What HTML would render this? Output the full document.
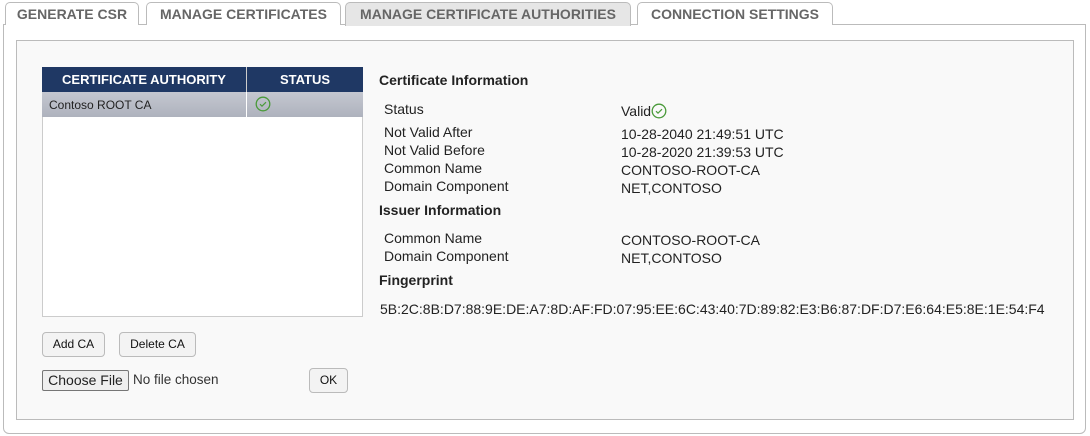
<!DOCTYPE html>
<html><head><style>
*{box-sizing:border-box;margin:0;padding:0}
body{width:1090px;height:436px;background:#fff;font-family:"Liberation Sans",sans-serif;position:relative;overflow:hidden;color:#222}
.tab{position:absolute;top:2px;height:23px;border:1px solid #bbb;border-bottom:none;border-radius:5px 5px 0 0;background:#fff;font-weight:bold;font-size:14px;color:#666;text-align:center;line-height:22px}
.panel{position:absolute;left:3px;top:24px;width:1083px;height:410px;border:1px solid #bbb;border-radius:0 0 6px 6px}
.inner{position:absolute;left:16px;top:40px;width:1058px;height:380px;border:1px solid #bbb;background:#f9f9f9}
.a{position:absolute;font-size:14px;white-space:nowrap}
.h{font-weight:bold;font-size:14px}
.btn{position:absolute;height:25px;border:1px solid #bbb;border-radius:4px;background:#f3f3f3;font-size:12px;text-align:center;line-height:23px;color:#111}
</style></head><body>
<div class="panel"></div>
<div class="tab" style="left:5px;width:134px">GENERATE CSR</div>
<div class="tab" style="left:146px;width:195px">MANAGE CERTIFICATES</div>
<div class="tab" style="left:345px;width:286px;background:#e6e6e6;height:24px">MANAGE CERTIFICATE AUTHORITIES</div>
<div class="tab" style="left:637px;width:196px">CONNECTION SETTINGS</div>
<div class="inner"></div>
<div style="position:absolute;left:42px;top:67px;width:321px;height:250px;border:1px solid #ccc;background:#fff"></div>
<div style="position:absolute;left:42px;top:67px;width:321px;height:25px;background:#1f3864;color:#fff;font-weight:bold;font-size:13px;line-height:25px">
<span style="position:absolute;left:0;width:204px;text-align:center">CERTIFICATE AUTHORITY</span>
<span style="position:absolute;left:204px;width:1px;height:25px;background:#ccc"></span>
<span style="position:absolute;left:205px;width:116px;text-align:center">STATUS</span></div>
<div style="position:absolute;left:42px;top:92px;width:321px;height:25px;background:linear-gradient(#c4c7d0,#aeb2bd);font-size:12px;line-height:27px">
<span style="position:absolute;left:7px">Contoso ROOT CA</span>
<span style="position:absolute;left:204px;width:1px;height:25px;background:#fff"></span>
<svg style="position:absolute;left:213px;top:4px" width="16" height="16"><circle cx="8" cy="8" r="6.8" fill="none" stroke="#4a9a3a" stroke-width="1.3"/><path d="M5 8.2l2 2 4-4" fill="none" stroke="#4a9a3a" stroke-width="1.2"/></svg></div>
<div class="a h" style="left:379px;top:72px">Certificate Information</div>
<div class="a" style="left:384px;top:101px">Status</div>
<div class="a" style="left:621px;top:103px">Valid<svg style="vertical-align:-3px" width="16" height="16"><circle cx="8" cy="8" r="6.8" fill="none" stroke="#4a9a3a" stroke-width="1.3"/><path d="M5 8.2l2 2 4-4" fill="none" stroke="#4a9a3a" stroke-width="1.2"/></svg></div>
<div class="a" style="left:384px;top:124px">Not Valid After</div>
<div class="a" style="left:621px;top:126px">10-28-2040 21:49:51 UTC</div>
<div class="a" style="left:384px;top:142px">Not Valid Before</div>
<div class="a" style="left:621px;top:144px">10-28-2020 21:39:53 UTC</div>
<div class="a" style="left:384px;top:160px">Common Name</div>
<div class="a" style="left:621px;top:162px">CONTOSO-ROOT-CA</div>
<div class="a" style="left:384px;top:178px">Domain Component</div>
<div class="a" style="left:621px;top:180px">NET,CONTOSO</div>
<div class="a h" style="left:379px;top:202px">Issuer Information</div>
<div class="a" style="left:384px;top:230px">Common Name</div>
<div class="a" style="left:621px;top:232px">CONTOSO-ROOT-CA</div>
<div class="a" style="left:384px;top:248px">Domain Component</div>
<div class="a" style="left:621px;top:250px">NET,CONTOSO</div>
<div class="a h" style="left:379px;top:272px">Fingerprint</div>
<div class="a" style="left:380px;top:301px;font-size:14px">5B:2C:8B:D7:88:9E:DE:A7:8D:AF:FD:07:95:EE:6C:43:40:7D:89:82:E3:B6:87:DF:D7:E6:64:E5:8E:1E:54:F4</div>
<div class="btn" style="left:42px;top:332px;width:63px">Add CA</div>
<div class="btn" style="left:119px;top:332px;width:77px">Delete CA</div>
<div style="position:absolute;left:42px;top:370px;width:87px;height:21px;border:1px solid #767676;border-radius:2px;background:#efefef;font-size:14px;text-align:center;line-height:19px">Choose File</div>
<div class="a" style="left:133px;top:372px;font-size:13.5px;color:#333">No file chosen</div>
<div class="btn" style="left:309px;top:368px;width:39px">OK</div>
</body></html>
